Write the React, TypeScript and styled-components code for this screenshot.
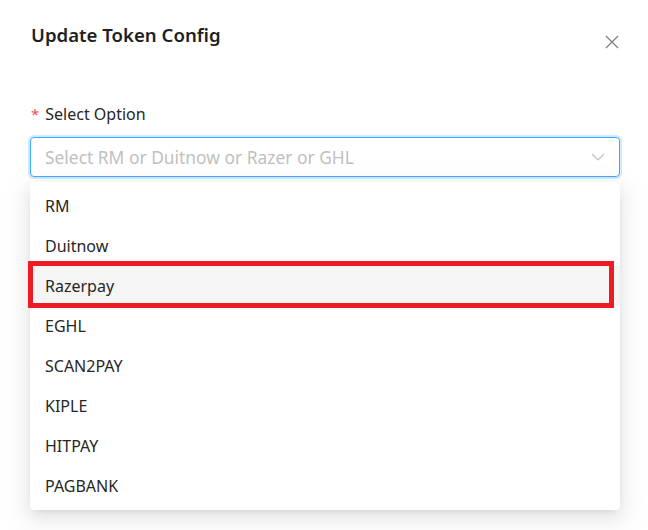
import React from "react";
import styled, { createGlobalStyle } from "styled-components";

const Global = createGlobalStyle`
  html, body { margin: 0; padding: 0; background: #fff; }
  body { font-family: "Noto Sans", "Open Sans", sans-serif; }
`;

const Modal = styled.div`
  position: relative;
  width: 648px;
  height: 530px;
  background: #fff;
  padding: 21px 28px 0 30px;
  box-sizing: border-box;
  overflow: hidden;
`;

const Header = styled.div`
  display: flex;
  justify-content: space-between;
  align-items: flex-start;
`;

const Title = styled.h2`
  margin: 0;
  font-size: 18.6px;
  line-height: 28px;
  font-weight: 600;
  color: #1f1f1f;
  padding-left: 1px;
`;

const Close = styled.button`
  border: 0;
  background: none;
  padding: 0;
  margin-top: 13px;
  width: 16px;
  height: 16px;
  display: flex;
  align-items: center;
  justify-content: center;
  cursor: pointer;
`;

const Field = styled.div`
  margin-top: 52px;
  display: flex;
  flex-direction: column;
`;

const Label = styled.label`
  font-size: 16px;
  line-height: 24px;
  color: #262626;
  display: flex;
  align-items: center;
  gap: 6px;
  padding-left: 1px;
`;

const Star = styled.span`
  color: #ff4d4f;
  font-size: 15px;
`;

const Input = styled.div`
  margin-top: 11px;
  height: 40px;
  width: 590px;
  box-sizing: border-box;
  border: 1px solid #40a9ff;
  border-radius: 4px;
  box-shadow: 0 0 0 2px rgba(24, 144, 255, 0.2);
  display: flex;
  align-items: center;
  justify-content: space-between;
  padding: 0 14px 0 14px;
`;

const Placeholder = styled.span`
  color: #bfbfbf;
  font-size: 17.4px;
`;

const Dropdown = styled.ul`
  list-style: none;
  margin: 5px 0 0;
  padding: 4px 0;
  width: 590px;
  background: #fff;
  border-radius: 4px;
  box-shadow: 0 3px 6px -4px rgba(0, 0, 0, 0.12), 0 6px 16px 0 rgba(0, 0, 0, 0.08),
    0 9px 28px 8px rgba(0, 0, 0, 0.05);
  position: relative;
`;

const Item = styled.li<{ $active?: boolean }>`
  height: 40px;
  display: flex;
  align-items: center;
  padding: 0 15px;
  font-size: 16px;
  color: #262626;
  background: ${(p) => (p.$active ? "#f5f5f5" : "transparent")};
  position: relative;
`;

const Highlight = styled.span`
  position: absolute;
  left: -2px;
  right: 6px;
  top: -5px;
  bottom: -2px;
  border: 5px solid #ed1c24;
  pointer-events: none;
`;

const options = ["RM", "Duitnow", "Razerpay", "EGHL", "SCAN2PAY", "KIPLE", "HITPAY", "PAGBANK"];

export default function App() {
  return (
    <>
      <Global />
      <Modal>
        <Header>
          <Title>Update Token Config</Title>
          <Close aria-label="close">
            <svg width="14" height="14" viewBox="0 0 14 14">
              <path d="M1 1 L13 13 M13 1 L1 13" stroke="#808080" strokeWidth="1.3" fill="none" />
            </svg>
          </Close>
        </Header>
        <Field>
          <Label>
            <Star>*</Star>Select Option
          </Label>
          <Input>
            <Placeholder>Select RM or Duitnow or Razer or GHL</Placeholder>
            <svg width="14" height="10" viewBox="0 0 14 10">
              <path d="M1 2 L7 8 L13 2" stroke="#bfbfbf" strokeWidth="1.2" fill="none" />
            </svg>
          </Input>
          <Dropdown>
            {options.map((o) => (
              <Item key={o} $active={o === "Razerpay"}>
                {o}
                {o === "Razerpay" && <Highlight />}
              </Item>
            ))}
          </Dropdown>
        </Field>
      </Modal>
    </>
  );
}
